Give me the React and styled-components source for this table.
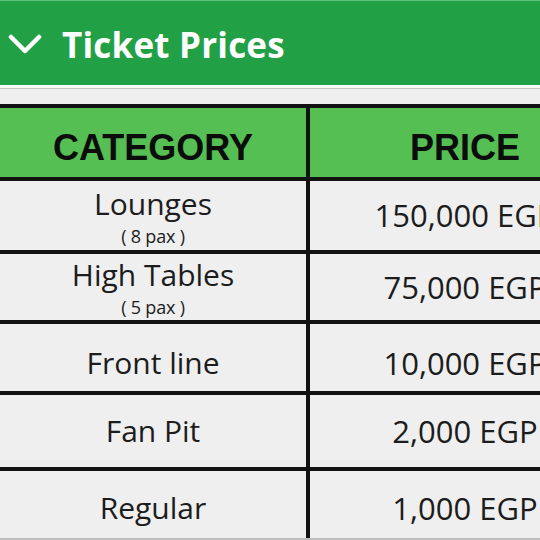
import styled, { createGlobalStyle } from 'styled-components'

const GlobalStyle = createGlobalStyle`
  html, body {
    margin: 0;
    padding: 0;
    background: #efefef;
    overflow: hidden;
  }
  * { box-sizing: border-box; }
`

const Page = styled.div`
  width: 540px;
  height: 540px;
  overflow: hidden;
  background: #efefef;
`

const TopBar = styled.div`
  height: 85px;
  display: flex;
  align-items: center;
  gap: 20px;
  padding: 2px 0 0 8px;
  background: #22a046;
  border-top: 1px solid #5fbf7c;
`

const Title = styled.h1`
  margin: 0;
  color: #fff;
  font-family: "Open Sans", "Noto Sans", sans-serif;
  font-weight: 700;
  font-size: 35px;
  letter-spacing: 0.2px;
`

const Strip = styled.div`
  height: 4px;
  background: #fbfbfb;
  border-bottom: 1px solid #c6c6c6;
`

const TableWrap = styled.div`
  margin-top: 15px;
  width: 620px;
`

const Table = styled.div`
  display: grid;
  grid-template-columns: 306px 310px;
  grid-template-rows: 69px 69px 66px 67px 72px 67px;
  column-gap: 4px;
  row-gap: 4px;
  padding-top: 4px;
  background: #121212;
  border-bottom: 2px solid #bdbdbd;
`

const HeadCell = styled.div`
  display: flex;
  align-items: center;
  justify-content: center;
  padding-top: 10px;
  background: #55bf53;
  color: #0c0c0c;
  font-family: "Liberation Sans", Arial, sans-serif;
  font-weight: 700;
  font-size: 36px;
`

const Cell = styled.div`
  display: flex;
  flex-direction: column;
  align-items: center;
  justify-content: center;
  padding-top: ${(p) => p.$shift || 0}px;
  background: #efefef;
  color: #1c1c1c;
  font-family: "Open Sans", "Noto Sans", sans-serif;
  overflow: hidden;
`

const Name = styled.span`
  font-size: 30px;
  line-height: 1.36;
  white-space: nowrap;
`

const Pax = styled.span`
  font-size: 18px;
  line-height: 1.36;
  margin-top: -1px;
  letter-spacing: -0.2px;
`

const Price = styled.span`
  font-size: 31px;
  line-height: 1.1;
  white-space: nowrap;
`

const Chevron = () => (
  <svg width="34" height="20" viewBox="0 0 34 20">
    <polyline
      points="3,3 17,17 31,3"
      fill="none"
      stroke="#fff"
      strokeWidth="4.5"
      strokeLinecap="round"
      strokeLinejoin="round"
    />
  </svg>
)

const rows = [
  { name: 'Lounges', pax: '( 8 pax )', price: '150,000 EGP', shift: 1 },
  { name: 'High Tables', pax: '( 5 pax )', price: '75,000 EGP', shift: 0 },
  { name: 'Front line', price: '10,000 EGP', shift: 12 },
  { name: 'Fan Pit', price: '2,000 EGP', shift: 0 },
  { name: 'Regular', price: '1,000 EGP', shift: 8 },
]

const App = () => {
  return (
    <Page>
      <GlobalStyle />
      <TopBar>
        <Chevron />
        <Title>Ticket Prices</Title>
      </TopBar>
      <Strip />
      <TableWrap>
        <Table>
          <HeadCell>CATEGORY</HeadCell>
          <HeadCell>PRICE</HeadCell>
          {rows.map((row) => (
            <>
              <Cell key={row.name} $shift={row.shift}>
                <Name>{row.name}</Name>
                {row.pax && <Pax>{row.pax}</Pax>}
              </Cell>
              <Cell key={row.price} $shift={row.pax ? 0 : row.shift}>
                <Price>{row.price}</Price>
              </Cell>
            </>
          ))}
        </Table>
      </TableWrap>
    </Page>
  )
}

export default App
